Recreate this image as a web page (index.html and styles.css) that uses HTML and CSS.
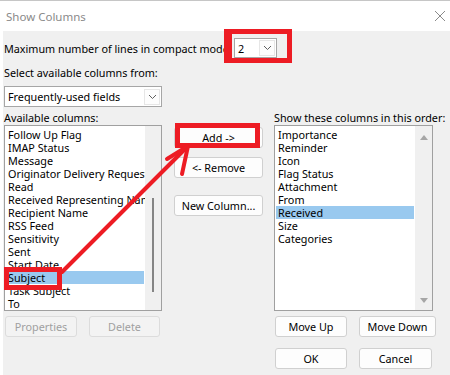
FILE: index.html
```html
<!DOCTYPE html>
<html lang="en">
    <head>
        <meta charset="UTF-8" />
        <link rel="stylesheet" href="styles.css">
    </head>
    <body>
        <div class="titlebar">
            <span class="title">Show Columns</span>
            <svg class="close" width="12" height="12" viewBox="0 0 12 12"><path d="M1 1 L11 11 M11 1 L1 11" stroke="#8a8a8a" stroke-width="1" fill="none"/></svg>
        </div>
        <div class="dialog">
            <div class="row_lines">
                <span class="lines_label">Maximum number of lines in compact mode:</span>
                <div class="combo combo_small">
                    <span class="combo_text">2</span>
                    <span class="drop"><svg width="9" height="6" viewBox="0 0 9 6"><path d="M1 1 L4.5 4.5 L8 1" stroke="#606060" stroke-width="1" fill="none"/></svg></span>
                </div>
            </div>
            <div class="label label_select">Select available columns from:</div>
            <div class="combo combo_wide">
                <span class="combo_text">Frequently-used fields</span>
                <span class="drop"><svg width="9" height="6" viewBox="0 0 9 6"><path d="M1 1 L4.5 4.5 L8 1" stroke="#606060" stroke-width="1" fill="none"/></svg></span>
            </div>
            <div class="columns">
                <div class="col col_left">
                    <div class="label">Available columns:</div>
                    <div class="listbox">
                        <div class="items">
                            <div class="item">Follow Up Flag</div>
                            <div class="item">IMAP Status</div>
                            <div class="item">Message</div>
                            <div class="item">Originator Delivery Requested</div>
                            <div class="item">Read</div>
                            <div class="item">Received Representing Name</div>
                            <div class="item">Recipient Name</div>
                            <div class="item">RSS Feed</div>
                            <div class="item">Sensitivity</div>
                            <div class="item">Sent</div>
                            <div class="item">Start Date</div>
                            <div class="item selected">Subject</div>
                            <div class="item">Task Subject</div>
                            <div class="item">To</div>
                        </div>
                        <div class="scroll scroll_thin"><div class="thumb"></div></div>
                    </div>
                    <div class="btn_row">
                        <button class="btn disabled w_props">Properties</button>
                        <button class="btn disabled w_delete">Delete</button>
                    </div>
                </div>
                <div class="col col_mid">
                    <button class="btn mid_btn">Add -&gt;</button>
                    <button class="btn mid_btn btn_remove">&lt;- Remove</button>
                    <button class="btn mid_btn btn_new">New Column...</button>
                </div>
                <div class="col col_right">
                    <div class="label">Show these columns in this order:</div>
                    <div class="listbox listbox_right">
                        <div class="items">
                            <div class="item">Importance</div>
                            <div class="item">Reminder</div>
                            <div class="item">Icon</div>
                            <div class="item">Flag Status</div>
                            <div class="item">Attachment</div>
                            <div class="item">From</div>
                            <div class="item selected">Received</div>
                            <div class="item">Size</div>
                            <div class="item">Categories</div>
                        </div>
                        <div class="scroll scroll_arrows">
                            <svg width="8" height="5" viewBox="0 0 8 5"><path d="M0 5 L4 0 L8 5 Z" fill="#a6a6a6"/></svg>
                            <svg width="8" height="5" viewBox="0 0 8 5"><path d="M0 0 L4 5 L8 0 Z" fill="#a6a6a6"/></svg>
                        </div>
                    </div>
                    <div class="btn_row">
                        <button class="btn w_up">Move Up</button>
                        <button class="btn w_down">Move Down</button>
                    </div>
                    <div class="btn_row btn_row_ok">
                        <button class="btn w_up">OK</button>
                        <button class="btn w_cancel">Cancel</button>
                    </div>
                </div>
            </div>
        </div>

        <!-- red annotations drawn on top -->
        <div class="mark mark_combo"></div>
        <div class="mark mark_add"></div>
        <div class="mark mark_subject"></div>
        <svg class="arrow" width="450" height="375" viewBox="0 0 450 375">
            <path d="M62 272 L186 148" stroke="#ed1c24" stroke-width="4" stroke-linecap="round" fill="none"/>
            <path d="M167 159 L188 146 L182 174" stroke="#ed1c24" stroke-width="4" stroke-linecap="round" stroke-linejoin="round" fill="none"/>
        </svg>
    </body>
</html>
```

FILE: styles.css
```css
* {
    box-sizing: border-box;
}
body {
    margin: 0;
    width: 450px;
    height: 375px;
    overflow: hidden;
    background: #fff;
    font-family: "Noto Sans", "Open Sans", sans-serif;
    font-size: 10.8px;
    color: #000;
    position: relative;
}
.titlebar {
    height: 31px;
    border-top: 1px solid #c6c6c6;
    display: flex;
    align-items: center;
    justify-content: space-between;
    padding: 0 4px 0 6px;
}
.title {
    color: #8a8a8a;
    font-size: 11.5px;
}
.dialog {
    margin-left: 3px;
    height: 344px;
    background: #f0f0f0;
    padding: 7px 0 0 1px;
}
.row_lines {
    display: flex;
    align-items: center;
    height: 20px;
}
.lines_label {
    width: 230px;
    white-space: nowrap;
}
.label {
    height: 14px;
    line-height: 14px;
    white-space: nowrap;
}
.label_select {
    margin-top: 8px;
}
.combo {
    background: #fff;
    border: 1px solid #a6a6a6;
    display: flex;
    align-items: center;
    justify-content: space-between;
    padding: 0 1px 0 3px;
}
.combo_small {
    width: 43px;
    height: 20px;
}
.combo_wide {
    margin-top: 6px;
    width: 158px;
    height: 21px;
}
.drop {
    width: 16px;
    height: 16px;
    border: 1px solid #e6e6e6;
    background: #fdfdfd;
    display: flex;
    align-items: center;
    justify-content: center;
}
.columns {
    margin-top: 4px;
    display: flex;
}
.col_left {
    width: 158px;
}
.col_mid {
    width: 89px;
    margin-left: 12px;
    padding-top: 16px;
    display: flex;
    flex-direction: column;
}
.col_right {
    width: 163px;
    margin-left: 11px;
}
.listbox {
    width: 158px;
    height: 186px;
    border: 1px solid #a0a0a0;
    background: #fff;
    display: flex;
}
.listbox_right {
    width: 159px;
}
.items {
    flex: 1;
    overflow: hidden;
    padding-top: 2px;
}
.item {
    height: 13px;
    line-height: 13px;
    padding-left: 2px;
    margin: 0 1px;
    white-space: nowrap;
}
.selected {
    background: #99c9ef;
}
.scroll {
    width: 16px;
    background: #f0f0f0;
}
.thumb {
    width: 2px;
    height: 94px;
    background: #858585;
    margin: 72px 0 0 7px;
}
.scroll_arrows {
    width: 17px;
    display: flex;
    flex-direction: column;
    justify-content: space-between;
    align-items: center;
    padding: 9px 0 7px 0;
}
.btn {
    font-family: "Noto Sans", "Open Sans", sans-serif;
    font-size: 10.8px;
    color: #000;
    background: #fdfdfd;
    border: 1px solid #d0d0d0;
    border-radius: 3px;
    height: 21px;
    padding: 0;
    line-height: 18px;
}
.btn.disabled {
    color: #a0a0a0;
    background: #f3f3f3;
    border-color: #dcdcdc;
}
.btn_row {
    display: flex;
    gap: 12px;
    margin-top: 5px;
    padding-left: 1px;
}
.btn_row_ok {
    margin-top: 11px;
}
.w_props { width: 72px; }
.w_delete { width: 71px; }
.w_up { width: 72px; }
.w_down { width: 77px; }
.w_cancel { width: 73px; }
.mid_btn {
    width: 89px;
}
.btn_remove {
    margin-top: 9px;
}
.btn_new {
    margin-top: 17px;
}
.mark {
    position: absolute;
    border: 5px solid #ed1c24;
}
.mark_combo {
    left: 224px;
    top: 29px;
    width: 68px;
    height: 34px;
    border-left-width: 8px;
}
.mark_add {
    left: 175px;
    top: 123px;
    width: 85px;
    height: 25px;
}
.mark_subject {
    left: 4px;
    top: 267px;
    width: 58px;
    height: 23px;
}
.arrow {
    position: absolute;
    left: 0;
    top: 0;
    pointer-events: none;
}
```
